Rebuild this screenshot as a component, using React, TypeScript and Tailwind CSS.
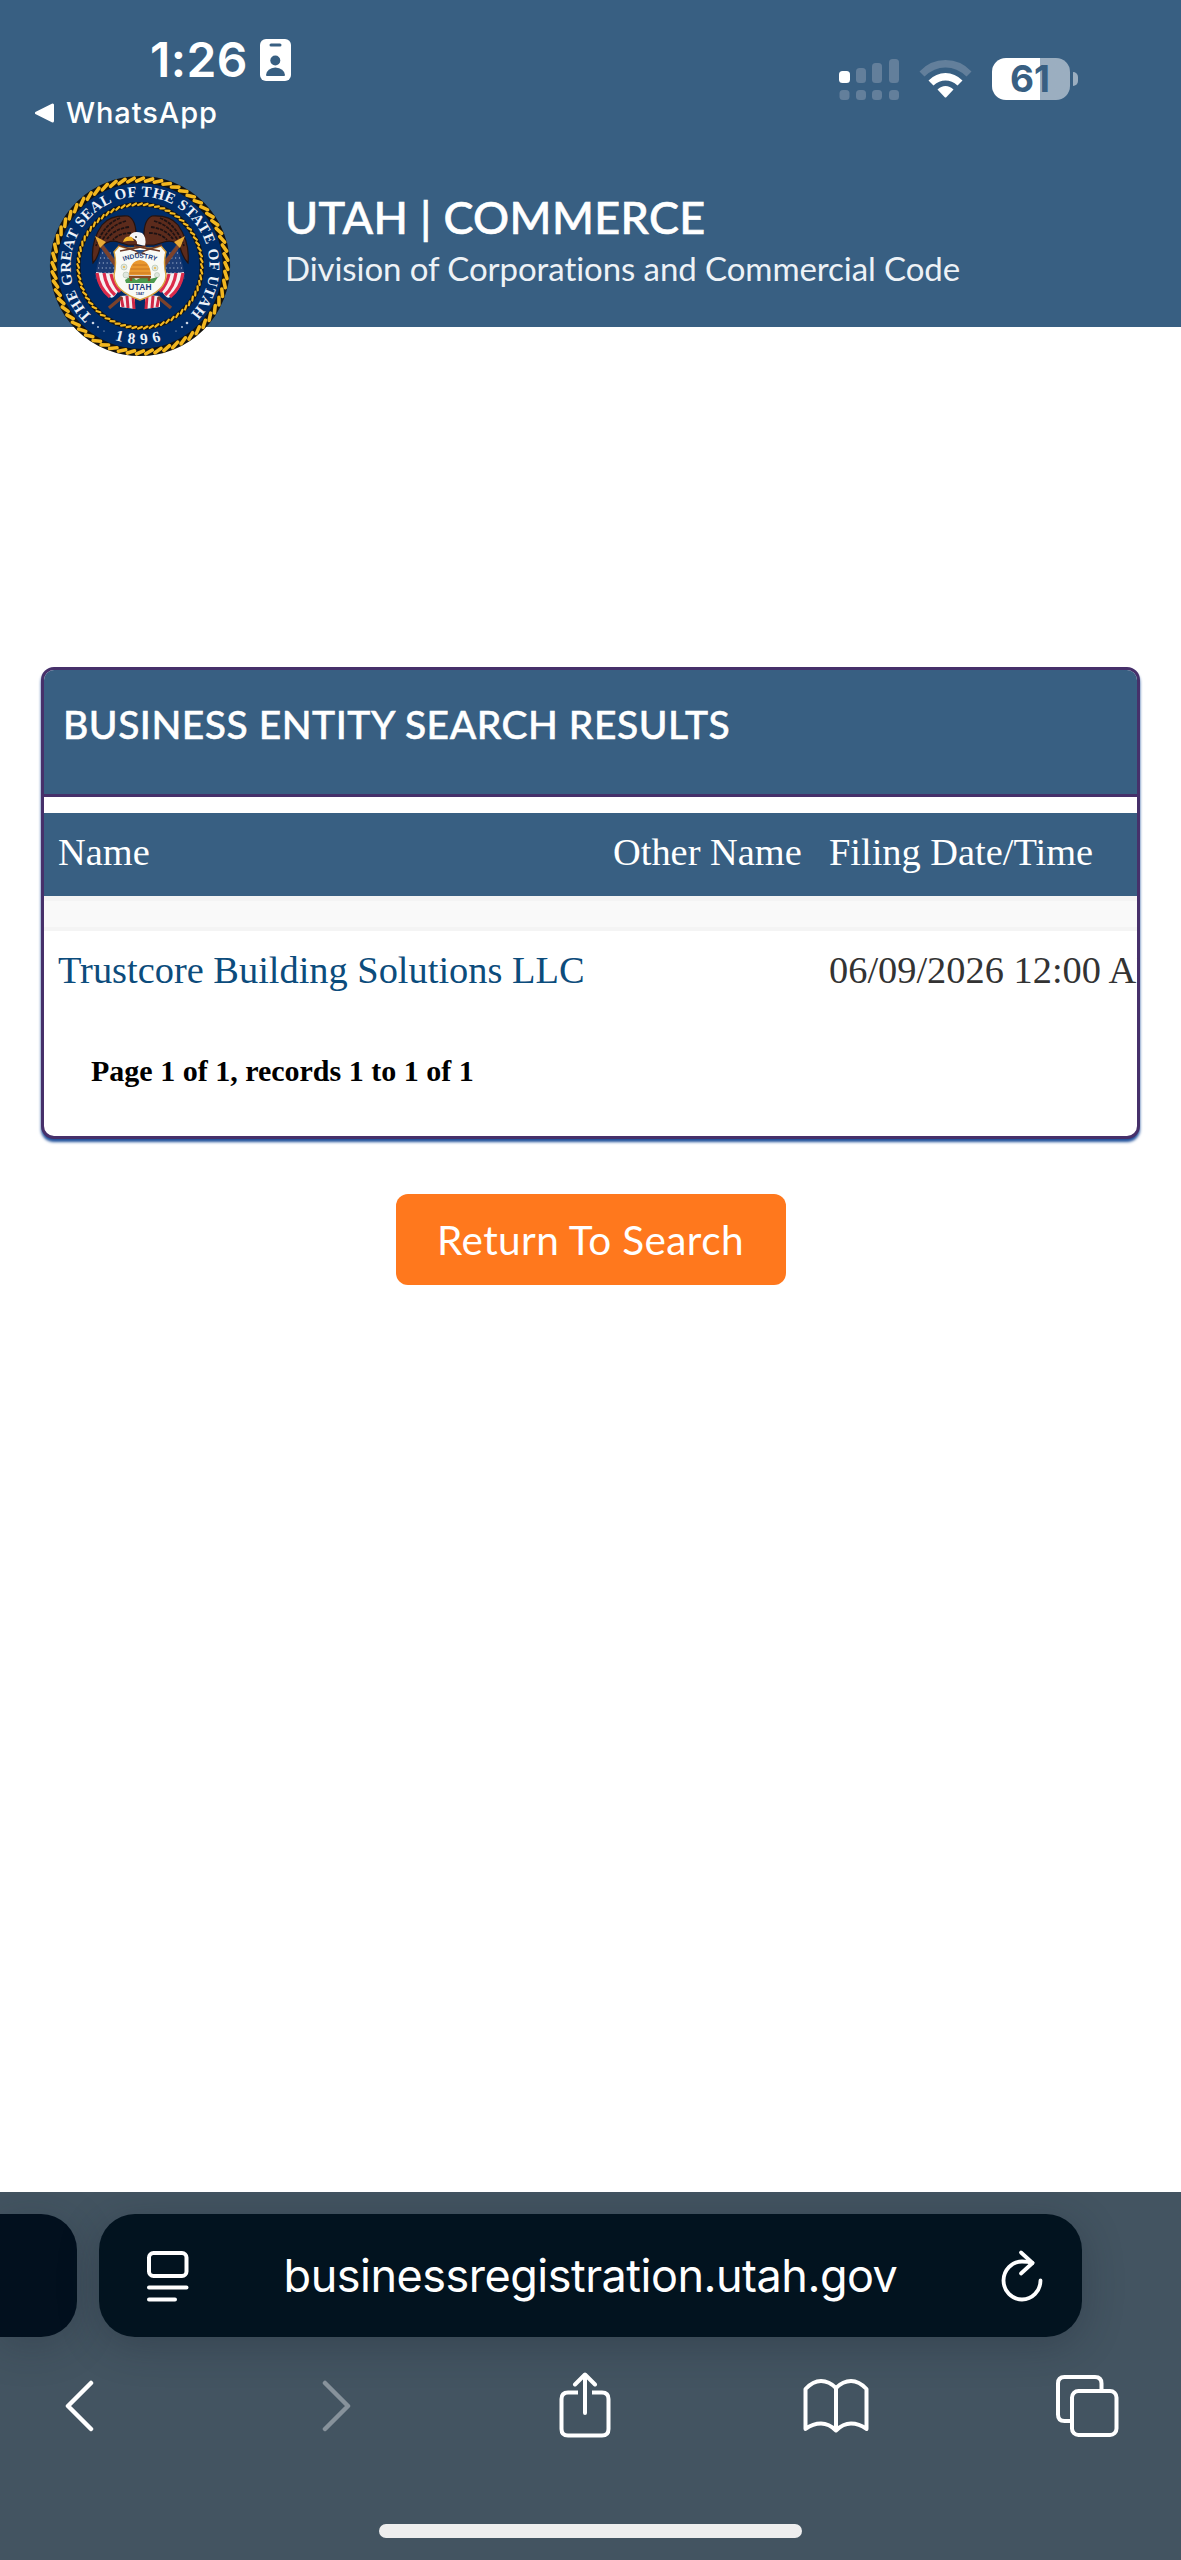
import React from 'react';

const INTER = "font-['Inter','Liberation_Sans',sans-serif]";
const LATO = "font-['Lato','Open_Sans',sans-serif]";
const SERIF = "font-['Liberation_Serif',serif]";

const results = [
  { name: 'Trustcore Building Solutions LLC', otherName: '', filed: '06/09/2026 12:00 AM' }
];

interface RopeProps {
  r: number;
  width: number;
  count: number;
}

// Twisted gold rope on a black ring
function Rope({ r, width, count }: RopeProps) {
  const half = width / 2 - 0.7;
  return (
    <g>
      <circle r={r} fill="none" stroke="#15130f" strokeWidth={width} />
      {Array.from({ length: count }, (_, i) => (
        <path
          key={i}
          d={`M${-half * 1.15} ${-r + half * 0.5}L${half * 1.15} ${-r - half * 0.5}`}
          transform={`rotate(${(i * 360) / count})`}
          stroke="#f3b71f"
          strokeWidth={width * 0.48}
          strokeLinecap="round"
        />
      ))}
    </g>
  );
}

function FlagSide() {
  return (
    <g>
      <path d="M-36 -21L-25 -7L-23 16L-45 13Q-43 -6 -36 -21Z" fill="#1d3c74" />
      <path d="M-38 -13h10M-40 -8h13M-41 -3h15M-42 2h17M-43 7h18" stroke="#b9c6de" strokeWidth="1.1" strokeDasharray="1.1 2.7" />
      <path d="M-44 6Q-34 8 -26 7L-21 24Q-27 34 -30 31Q-41 26 -44 6Z" fill="#f6f1f2" />
      <path d="M-43 7Q-41 22 -30 31M-36 7Q-34 21 -25 29M-29 8Q-27 18 -20 26" stroke="#dc2b4b" strokeWidth="3.2" fill="none" />
      <path d="M-20 30L-5 29V43L-20 41Z" fill="#f6e9ec" />
      <path d="M-19 31L-17 41M-13 30L-12 42M-7 30L-6 43" stroke="#cf2745" strokeWidth="3" />
      <path d="M-42 -25L-7 23M-18 31L-31 42" stroke="#7b422c" strokeWidth="3.4" />
    </g>
  );
}

function StateSeal() {
  return (
    <svg viewBox="-92 -92 184 184" className="h-[184px] w-[184px] shrink-0">
      <defs>
        <path id="seal-top" d="M-47.8 50.4A69.5 69.5 0 1 1 49.8 48.5" />
        <path id="seal-bottom" d="M-40 67A78 78 0 0 0 40 67" />
        <path id="seal-motto" d="M-20 -3Q0 -13 20 -3" />
      </defs>
      <circle r="86" fill="#002c68" />
      <Rope r={86.4} width={7.4} count={60} />
      <Rope r={61.8} width={4.6} count={68} />
      <g className="font-['Liberation_Serif',serif] font-bold" fill="#eef2f8">
        <text fontSize="15">
          <textPath href="#seal-top" textLength="327">THE GREAT SEAL OF THE STATE OF UTAH</textPath>
        </text>
        <text fontSize="15.5" letterSpacing="5.5">
          <textPath href="#seal-bottom" startOffset="16">1896</textPath>
        </text>
      </g>
      <g fill="#cdd7e6">
        <circle cx="-47" cy="57" r="1.3" />
        <circle cx="-42" cy="61" r="0.9" />
        <circle cx="-36" cy="65" r="0.6" />
        <circle cx="47" cy="57" r="1.3" />
        <circle cx="42" cy="61" r="0.9" />
        <circle cx="36" cy="65" r="0.6" />
      </g>

      <FlagSide />
      <g transform="scale(-1 1)">
        <FlagSide />
      </g>

      {/* Eagle */}
      <path
        d="M-4 -26Q-3 -46 -12 -50Q-30 -51 -38 -41Q-50 -24 -47 -3Q-42 -8 -40 -19Q-30 -27 -22 -24L-12 -21H14L24 -24Q34 -27 40 -19Q43 -8 48 -3Q50 -24 38 -41Q30 -51 12 -50Q3 -46 4 -26Z"
        fill="#5c2b1c"
        stroke="#241310"
        strokeWidth="1.2"
      />
      <path
        d="M-14 -45Q-30 -41 -38 -25M-11 -39Q-26 -37 -33 -27M-9 -33Q-21 -33 -27 -26M-20 -48Q-36 -42 -44 -20M14 -45Q30 -41 38 -25M11 -39Q26 -37 33 -27M9 -33Q21 -33 27 -26M20 -48Q36 -42 44 -20"
        stroke="#1e1213"
        strokeWidth="1.8"
        strokeDasharray="3.5 1"
        fill="none"
      />
      <path d="M-11 -29Q-8 -36 2 -33Q7 -29 5 -20L-3 -22Q-2 -27 -11 -29Z" fill="#f6f7f7" />
      <path d="M-8 -29Q-15 -31 -17 -24Q-10 -26 -6 -25Z" fill="#efb22c" />
      <circle cx="-4" cy="-29" r="0.9" fill="#222" />

      {/* Spear tips sit over the wings */}
      <path d="M-38 -20L-26 -5M38 -20L26 -5" stroke="#7b422c" strokeWidth="3" />
      <path d="M-45 -30L-34 -24L-40 -18ZM45 -30L34 -24L40 -18Z" fill="#e8ab37" />

      {/* Shield */}
      <path
        d="M-21 -20Q-12 -16 0 -19Q12 -16 21 -20L26 -14Q23 -4 26 9Q26 25 0 34Q-26 25 -26 9Q-23 -4 -26 -14Z"
        fill="#f8faf6"
        stroke="#d8a23c"
        strokeWidth="1.4"
      />
      <path d="M-22 -21L5 -12M22 -21L-5 -12M-20 -15L6 -20M20 -15L-6 -20" stroke="#6a3420" strokeWidth="1.5" />
      <path d="M-5 -16H5L0 -12Z" fill="#29518b" />
      <g fill="#dfe7df" stroke="#a6b99e" strokeWidth="0.5">
        <circle cx="-16" cy="1" r="3" />
        <circle cx="-14" cy="9" r="3" />
        <circle cx="15" cy="2" r="3" />
        <circle cx="17" cy="9" r="2.5" />
      </g>
      <path d="M-15 14Q-8 8 -4 14Q4 9 10 13L18 11L14 17H-14Z" fill="#4b9a4e" />
      <path d="M-11 9Q-10 -5 0 -6Q10 -5 11 9Z" fill="#e9982f" />
      <path d="M-7 -1H7M-9.5 3H9.5M-10.5 7H10.5" stroke="#bf6d1c" strokeWidth="0.8" />
      <path d="M-11 11H11M-9 11V15M9 11V15" stroke="#8a4a22" strokeWidth="2.4" />
      <circle cx="-16" cy="1" r="0.9" fill="#efb22c" />
      <circle cx="15" cy="2" r="0.9" fill="#efb22c" />
      <g className="font-['Liberation_Sans',sans-serif] font-bold" fill="#1d3c7c" textAnchor="middle">
        <text fontSize="6.6">
          <textPath href="#seal-motto" startOffset="50%">INDUSTRY</textPath>
        </text>
        <text y="24.4" fontSize="8.4" letterSpacing="0.2">UTAH</text>
        <text y="28.8" fontSize="3.8">1847</text>
      </g>
    </svg>
  );
}

function StatusBar() {
  return (
    <div className={`flex h-[174px] justify-between text-white ${INTER}`}>
      <div className="pt-[30px] pl-[35px]">
        <div className="flex h-[60px] items-center gap-[12px] pl-[115px]">
          <span className="text-[48px] leading-[60px] font-semibold tracking-[0.4px]">1:26</span>
          <svg viewBox="0 0 31 42" className="h-[42px] w-[31px]">
            <rect width="31" height="42" rx="6" fill="#fff" />
            <g fill="#385f82">
              <rect x="9.5" y="4.5" width="12" height="3" rx="1.5" />
              <circle cx="15.3" cy="21.5" r="5" />
              <path d="M6 36Q7 29 15.3 28.5Q24 29 25 36Q25 37 24 37H7Q6 37 6 36Z" />
            </g>
          </svg>
        </div>
        <div className="flex h-[46px] items-center gap-[11px]">
          <svg viewBox="0 0 20 20" className="h-[20px] w-[20px]">
            <path d="M1.5 10L17.5 2V18Z" fill="#fff" stroke="#fff" strokeWidth="3" strokeLinejoin="round" />
          </svg>
          <span className="text-[29px] leading-[46px] font-medium tracking-[0.9px]">WhatsApp</span>
        </div>
      </div>

      <div className="flex items-start gap-[20px] pt-[58px] pr-[103px]">
        <svg viewBox="0 0 60 42" className="h-[42px] w-[60px]" fill="#637f9b">
          <rect x="0" y="13" width="11" height="12" rx="3.5" fill="#fff" />
          <rect x="17" y="10" width="10" height="15" rx="3.5" />
          <rect x="33" y="5" width="10" height="20" rx="3.5" />
          <rect x="50" y="1" width="10" height="24" rx="3.5" />
          <rect x="0.5" y="32" width="10" height="10" rx="3.5" />
          <rect x="17" y="32" width="10" height="10" rx="3.5" />
          <rect x="33" y="32" width="10" height="10" rx="3.5" />
          <rect x="50" y="32" width="10" height="10" rx="3.5" />
        </svg>
        <svg viewBox="0 0 53 42" className="h-[42px] w-[53px]">
          <path d="M0.5 13.5Q11 2 26.5 2T52.5 13.5L47.5 18.5Q38 9.5 26.5 9.5T5.5 18.5Z" fill="#637f9b" />
          <path d="M9.5 22.5Q17 15 26.5 15T43.5 22.5L38.5 27.5Q33 22.5 26.5 22.5T14.5 27.5Z" fill="#fff" />
          <path d="M18.5 31.5Q22 28 26.5 28T34.5 31.5L27.5 39Q26.5 40 25.5 39Z" fill="#fff" />
        </svg>
        <div className="flex items-center gap-[3px]">
          <div className="flex h-[42px] w-[78px] items-center justify-center rounded-[14px] bg-linear-to-r from-white from-[61%] to-[#9baec0] to-[61%]">
            <span className="pr-[2px] text-[37px] leading-[42px] font-bold text-[#385f82]">61</span>
          </div>
          <div className="h-[14px] w-[5px] rounded-r-full bg-[#9baec0]" />
        </div>
      </div>
    </div>
  );
}

function SiteHeader() {
  return (
    <header className="flex h-[153px] gap-[53px] pl-[48px]">
      <StateSeal />
      <div className={`flex flex-col pt-[16px] whitespace-nowrap text-white ${LATO}`}>
        <h1 className="text-[45px] leading-[54px] font-medium tracking-[0.35px] [-webkit-text-stroke:0.6px_white]">
          UTAH | COMMERCE
        </h1>
        <p className="pt-[4px] text-[33px] leading-[40px] tracking-[-0.07px] text-[#eef2f6]">
          Division of Corporations and Commercial Code
        </p>
      </div>
    </header>
  );
}

function ResultsCard() {
  const columns = 'grid grid-cols-[555px_216px_400px] pl-[14px] text-[38.4px] whitespace-nowrap';
  return (
    <section className="h-[472px] overflow-hidden rounded-[13px] border-[3px] border-[#46306a] bg-white shadow-[0_3px_3px_#1e4f9a]">
      <div className="h-[127px] border-b-[3px] border-[#46306a] bg-[#385f82] pt-[29px] pl-[19px]">
        <h2 className={`text-[39px] leading-[50px] font-medium tracking-[0.52px] text-white [-webkit-text-stroke:0.5px_white] ${LATO}`}>
          BUSINESS ENTITY SEARCH RESULTS
        </h2>
      </div>
      <div className={`pt-[16px] ${SERIF}`}>
        <div className={`${columns} h-[83px] bg-[#385f82] leading-[78px] text-white`}>
          <span>Name</span>
          <span>Other Name</span>
          <span>Filing Date/Time</span>
        </div>
        <div className="h-[35px] border-t-[5px] border-b-[4px] border-[#f4f4f4] bg-[#f9f9f9]" />
        {results.map((row) => (
          <div key={row.name} className={`${columns} h-[100px] leading-[78px] text-[#333]`}>
            <span className="text-[#0c4c7c]">{row.name}</span>
            <span>{row.otherName}</span>
            <span>{row.filed}</span>
          </div>
        ))}
        <p className="pt-[20px] pl-[47px] text-[30px] leading-[40px] font-bold text-black">
          Page 1 of 1, records 1 to 1 of 1
        </p>
      </div>
    </section>
  );
}

function BrowserBar() {
  return (
    <footer className="h-[368px] overflow-hidden bg-[#435461] pt-[22px]">
      <div className="flex gap-[22px]">
        <div className="h-[123px] w-[77px] rounded-r-[36px] bg-[#02101e] shadow-[0_8px_40px_#1b223040]" />
        <div className="flex h-[123px] w-[983px] items-center justify-between rounded-[36px] bg-[#02131f] pr-[38px] pl-[47px] shadow-[0_8px_40px_#1b223050]">
          <svg viewBox="0 0 44 52" className="h-[52px] w-[44px]" fill="none" stroke="#fff" strokeWidth="4" strokeLinecap="round">
            <rect x="3" y="3" width="37.5" height="23" rx="4.5" />
            <path d="M3 37.5H40.5M3 49.5H29" />
          </svg>
          <span className={`mr-[9px] text-[45px] leading-[60px] tracking-[-0.5px] text-white ${INTER}`}>
            businessregistration.utah.gov
          </span>
          <svg viewBox="0 0 44 54" className="h-[54px] w-[44px]" fill="none" stroke="#fff" strokeWidth="3.8" strokeLinecap="round" strokeLinejoin="round">
            <path d="M32.5 14Q28 12.5 22 12.5A18.5 19 0 1 0 40.5 31.5" />
            <path d="M21 3.5L32.5 14L21 24.5" />
          </svg>
        </div>
      </div>

      <nav className="flex h-[137px] items-center pl-[64px]">
        <svg viewBox="0 0 30 52" className="h-[52px] w-[30px]" fill="none" stroke="#fff" strokeWidth="4.5" strokeLinecap="round" strokeLinejoin="round">
          <path d="M27 3L4 26L27 49" />
        </svg>
        <svg viewBox="0 0 30 52" className="ml-[228px] h-[52px] w-[30px]" fill="none" stroke="#87929b" strokeWidth="4.5" strokeLinecap="round" strokeLinejoin="round">
          <path d="M3 3L26 26L3 49" />
        </svg>
        <svg viewBox="0 0 54 68" className="ml-[206px] h-[68px] w-[54px]" fill="none" stroke="#fff" strokeWidth="4" strokeLinecap="round" strokeLinejoin="round">
          <path d="M20 20.5H10Q3.5 20.5 3.5 27V57Q3.5 63.5 10 63.5H44Q50.5 63.5 50.5 57V27Q50.5 20.5 44 20.5H34" strokeLinecap="butt" />
          <path d="M27 3V41M17 12.5L27 2.5L37 12.5" />
        </svg>
        <svg viewBox="0 0 68 56" className="ml-[190px] h-[56px] w-[68px]" fill="none" stroke="#fff" strokeWidth="4" strokeLinecap="round" strokeLinejoin="round">
          <path d="M34 10Q27 3 19 3T3.5 11V51Q11 45.5 19 45.5T34 52.5Q41 45.5 49 45.5T64.5 51V11Q57 3 49 3T34 10V52" />
        </svg>
        <svg viewBox="0 0 64 64" className="ml-[185px] h-[64px] w-[64px]" fill="none" stroke="#fff" strokeWidth="4">
          <rect x="17" y="17" width="44.5" height="44" rx="6.5" />
          <path d="M46.5 16.5V9.5Q46.5 3 40 3H9.5Q3 3 3 9.5V40.5Q3 47 9.5 47H16.5" />
        </svg>
      </nav>

      <div className="mx-auto mt-[50px] h-[14px] w-[423px] rounded-full bg-[#eee]" />
    </footer>
  );
}

export default function App() {
  return (
    <div className="flex h-[2560px] w-[1181px] flex-col overflow-hidden bg-white">
      <div className="bg-[#385f82]">
        <StatusBar />
        <SiteHeader />
      </div>
      <main className="flex-1 pt-[340px] pr-[41px] pl-[41px]">
        <ResultsCard />
        <div className="flex justify-center pt-[55px]">
          <button className={`h-[91px] w-[390px] rounded-[12px] bg-[#ff781d] pt-[1px] text-[40.5px] tracking-[0.4px] text-white ${LATO}`}>
            Return To Search
          </button>
        </div>
      </main>
      <BrowserBar />
    </div>
  );
}
